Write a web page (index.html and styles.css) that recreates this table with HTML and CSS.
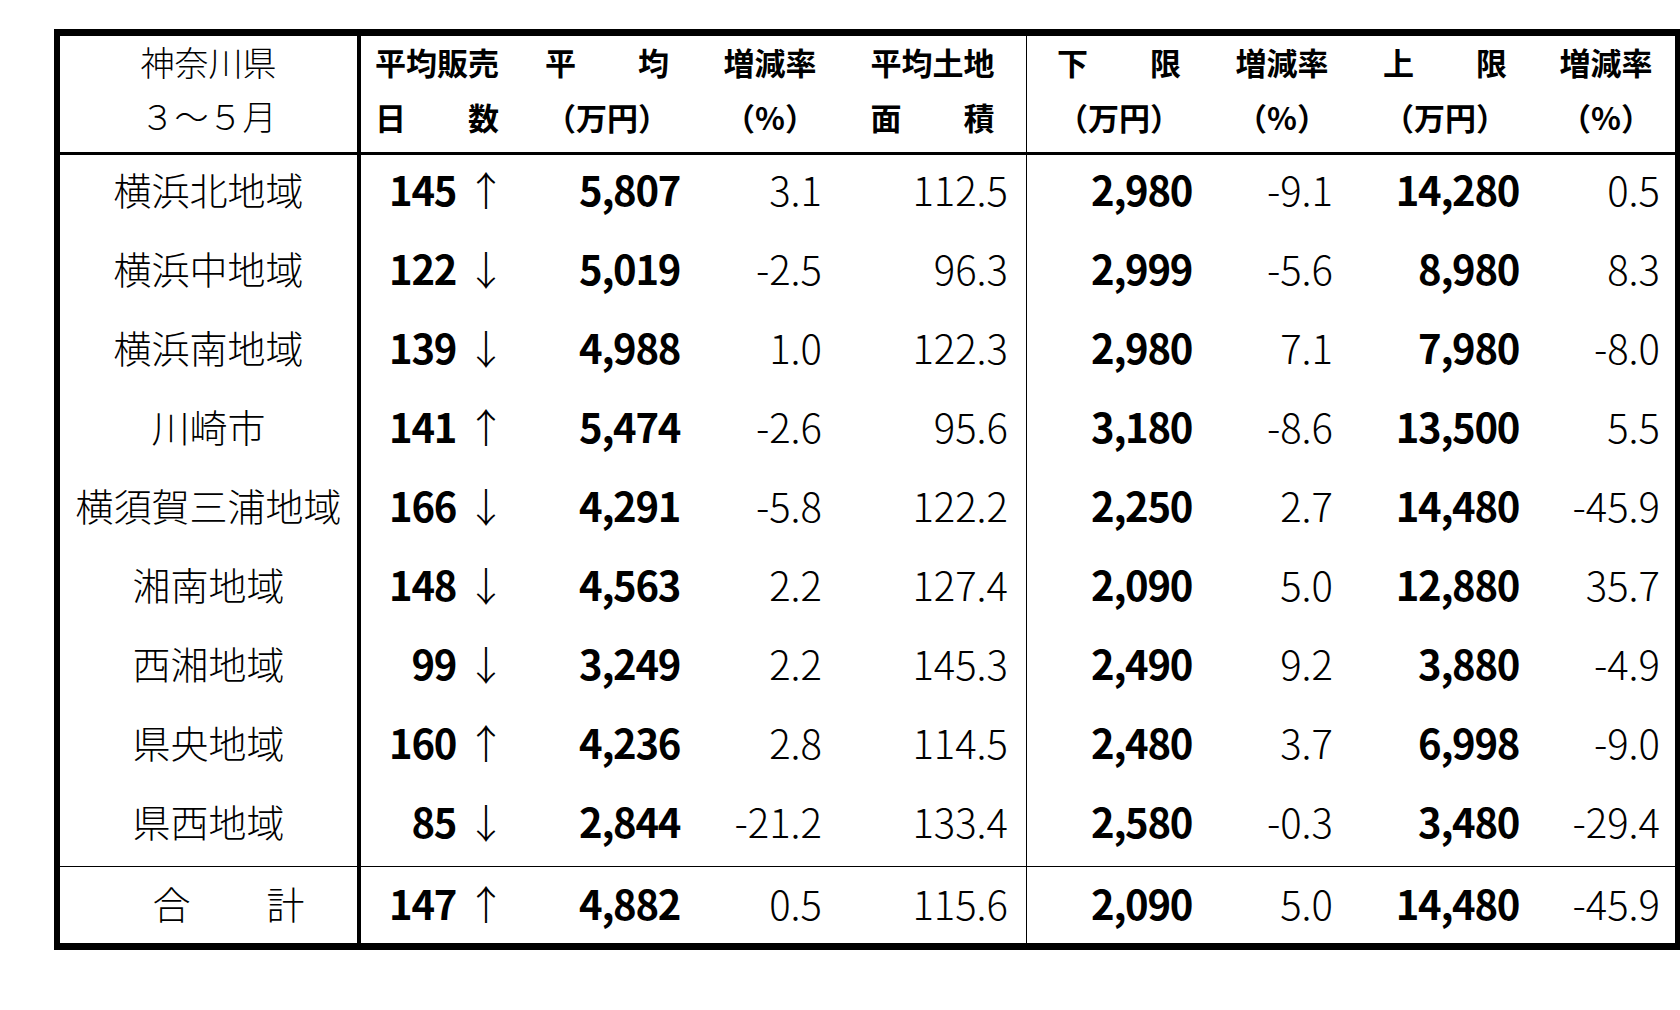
FILE: index.html
```html
<!DOCTYPE html>
<html lang="ja">
<head>
<meta charset="utf-8">
<title>神奈川県 3～5月</title>
<link rel="stylesheet" href="styles.css">
</head>
<body>
<main class="sheet">
  <div class="tbl">
    <div class="cell hd r1 c0 lt">神奈川県</div>
    <div class="cell hd r1">平均販売</div>
    <div class="cell hd r1">平　　均</div>
    <div class="cell hd r1">増減率</div>
    <div class="cell hd r1 c4">平均土地</div>
    <div class="cell hd r1">下　　限</div>
    <div class="cell hd r1">増減率</div>
    <div class="cell hd r1">上　　限</div>
    <div class="cell hd r1">増減率</div>

    <div class="cell hd r2 c0 lt">３～５月</div>
    <div class="cell hd r2">日　　数</div>
    <div class="cell hd r2">（万円）</div>
    <div class="cell hd r2">（%）</div>
    <div class="cell hd r2 c4">面　　積</div>
    <div class="cell hd r2">（万円）</div>
    <div class="cell hd r2">（%）</div>
    <div class="cell hd r2">（万円）</div>
    <div class="cell hd r2">（%）</div>

    <div class="cell name c0">横浜北地域</div>
    <div class="cell num k1">145 <span class="arr">↑</span></div>
    <div class="cell num k2">5,807</div>
    <div class="cell val k3">3.1</div>
    <div class="cell val k4 c4">112.5</div>
    <div class="cell num k5">2,980</div>
    <div class="cell val k6">-9.1</div>
    <div class="cell num k7">14,280</div>
    <div class="cell val k8">0.5</div>

    <div class="cell name c0">横浜中地域</div>
    <div class="cell num k1">122 <span class="arr">↓</span></div>
    <div class="cell num k2">5,019</div>
    <div class="cell val k3">-2.5</div>
    <div class="cell val k4 c4">96.3</div>
    <div class="cell num k5">2,999</div>
    <div class="cell val k6">-5.6</div>
    <div class="cell num k7">8,980</div>
    <div class="cell val k8">8.3</div>

    <div class="cell name c0">横浜南地域</div>
    <div class="cell num k1">139 <span class="arr">↓</span></div>
    <div class="cell num k2">4,988</div>
    <div class="cell val k3">1.0</div>
    <div class="cell val k4 c4">122.3</div>
    <div class="cell num k5">2,980</div>
    <div class="cell val k6">7.1</div>
    <div class="cell num k7">7,980</div>
    <div class="cell val k8">-8.0</div>

    <div class="cell name c0">川崎市</div>
    <div class="cell num k1">141 <span class="arr">↑</span></div>
    <div class="cell num k2">5,474</div>
    <div class="cell val k3">-2.6</div>
    <div class="cell val k4 c4">95.6</div>
    <div class="cell num k5">3,180</div>
    <div class="cell val k6">-8.6</div>
    <div class="cell num k7">13,500</div>
    <div class="cell val k8">5.5</div>

    <div class="cell name c0">横須賀三浦地域</div>
    <div class="cell num k1">166 <span class="arr">↓</span></div>
    <div class="cell num k2">4,291</div>
    <div class="cell val k3">-5.8</div>
    <div class="cell val k4 c4">122.2</div>
    <div class="cell num k5">2,250</div>
    <div class="cell val k6">2.7</div>
    <div class="cell num k7">14,480</div>
    <div class="cell val k8">-45.9</div>

    <div class="cell name c0">湘南地域</div>
    <div class="cell num k1">148 <span class="arr">↓</span></div>
    <div class="cell num k2">4,563</div>
    <div class="cell val k3">2.2</div>
    <div class="cell val k4 c4">127.4</div>
    <div class="cell num k5">2,090</div>
    <div class="cell val k6">5.0</div>
    <div class="cell num k7">12,880</div>
    <div class="cell val k8">35.7</div>

    <div class="cell name c0">西湘地域</div>
    <div class="cell num k1">99 <span class="arr">↓</span></div>
    <div class="cell num k2">3,249</div>
    <div class="cell val k3">2.2</div>
    <div class="cell val k4 c4">145.3</div>
    <div class="cell num k5">2,490</div>
    <div class="cell val k6">9.2</div>
    <div class="cell num k7">3,880</div>
    <div class="cell val k8">-4.9</div>

    <div class="cell name c0">県央地域</div>
    <div class="cell num k1">160 <span class="arr">↑</span></div>
    <div class="cell num k2">4,236</div>
    <div class="cell val k3">2.8</div>
    <div class="cell val k4 c4">114.5</div>
    <div class="cell num k5">2,480</div>
    <div class="cell val k6">3.7</div>
    <div class="cell num k7">6,998</div>
    <div class="cell val k8">-9.0</div>

    <div class="cell name c0">県西地域</div>
    <div class="cell num k1">85 <span class="arr">↓</span></div>
    <div class="cell num k2">2,844</div>
    <div class="cell val k3">-21.2</div>
    <div class="cell val k4 c4">133.4</div>
    <div class="cell num k5">2,580</div>
    <div class="cell val k6">-0.3</div>
    <div class="cell num k7">3,480</div>
    <div class="cell val k8">-29.4</div>

    <div class="cell name c0 tot total-name">合　　計</div>
    <div class="cell num k1 tot">147 <span class="arr">↑</span></div>
    <div class="cell num k2 tot">4,882</div>
    <div class="cell val k3 tot">0.5</div>
    <div class="cell val k4 c4 tot">115.6</div>
    <div class="cell num k5 tot">2,090</div>
    <div class="cell val k6 tot">5.0</div>
    <div class="cell num k7 tot">14,480</div>
    <div class="cell val k8 tot">-45.9</div>
  </div>
</main>
</body>
</html>
```

FILE: styles.css
```css
html, body {
  margin: 0;
  padding: 0;
  background: #fff;
}

body {
  font-family: "Noto Sans CJK JP", "Noto Sans", sans-serif;
  color: #000;
}

.sheet {
  padding: 29px 0 0 54px;
}

.tbl {
  box-sizing: border-box;
  width: 1627px;
  border-style: solid;
  border-color: #000;
  border-width: 7px 6px;
  display: grid;
  grid-template-columns: 301px 152px 188px 138px 188px 184px 142px 184px 138px;
  grid-template-rows: 58px 61px repeat(9, 79px) 77px;
}

.cell {
  box-sizing: border-box;
  display: flex;
  align-items: center;
  white-space: nowrap;
  line-height: 1;
  padding-bottom: 12px;
}

.c0 {
  border-right: 4px solid #000;
  justify-content: center;
}

.c4 {
  border-right: 1px solid #000;
}

.hd {
  justify-content: center;
  font-size: 31px;
  font-weight: 700;
}

.hd.lt {
  font-weight: 300;
  font-size: 34px;
}

.r1 {
  padding-bottom: 7px;
}

.r2 {
  border-bottom: 3px solid #000;
  padding-bottom: 14px;
}

.name {
  font-size: 38px;
  font-weight: 300;
}

.total-name {
  padding-left: 40px;
}

.num,
.val {
  justify-content: flex-end;
  font-size: 40px;
}

.num {
  font-weight: 700;
  letter-spacing: -1.3px;
}

.val {
  font-weight: 300;
}

.arr {
  font-weight: 300;
  letter-spacing: 0;
  margin-left: 10px;
}

.tot {
  border-top: 1px solid #000;
  padding-bottom: 4px;
}

.k1 { padding-right: 7px; }
.k2 { padding-right: 21px; }
.k3 { padding-right: 17px; }
.k4 { padding-right: 18px; }
.k5 { padding-right: 19px; }
.k6 { padding-right: 20px; }
.k7 { padding-right: 18px; }
.k8 { padding-right: 15px; }
```
